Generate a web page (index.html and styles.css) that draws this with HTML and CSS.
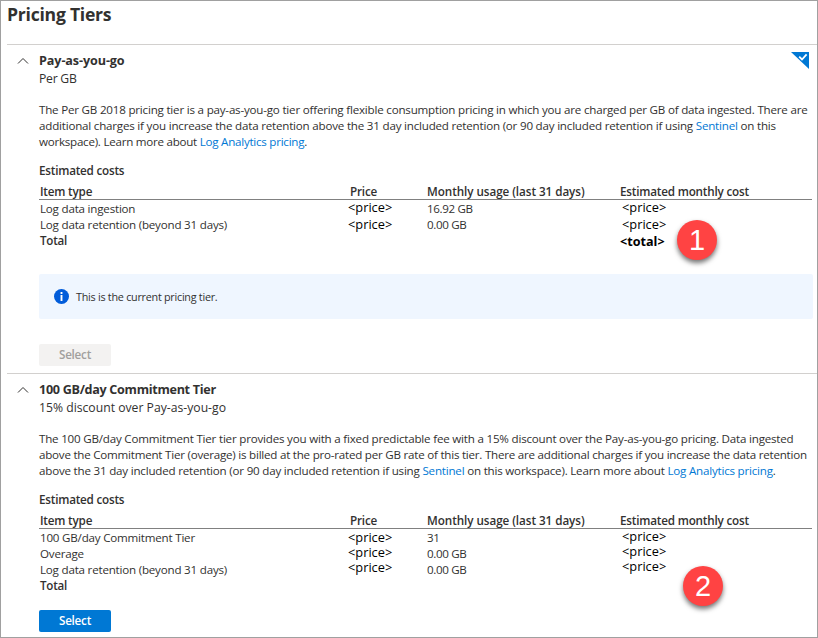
FILE: index.html
```
<!DOCTYPE html>
<html lang="en">
<head>
<meta charset="utf-8">
<title>Pricing Tiers</title>
<link rel="stylesheet" href="styles.css">
</head>
<body>
<main class="panel">
  <h1 class="title">Pricing Tiers</h1>

  <section class="tier">
    <svg class="chevron" viewBox="0 0 12 8"><path d="M1 6.5 6 1.5 11 6.5"/></svg>
    <svg class="selected" viewBox="0 0 18 17"><path class="corner" d="M0 0H18V17Z"/><path class="check" d="M8.2 4.6 11 7.5 15.6 2.4"/></svg>
    <div class="content">
      <h2 class="name">Pay-as-you-go</h2>
      <p class="subtitle short">Per GB</p>
      <p class="description"><span>The Per GB 2018 pricing tier is a pay-as-you-go tier offering flexible consumption pricing in which you are charged per GB of data ingested. There are</span>
        <span>additional charges if you increase the data retention above the 31 day included retention (or 90 day included retention if using <a>Sentinel</a> on this</span>
        <span class="tighter">workspace). Learn more about <a>Log Analytics pricing</a>.</span></p>
      <h3 class="costs-title">Estimated costs</h3>
      <div class="costs">
        <div class="row head"><span>Item type</span><span>Price</span><span class="wide">Monthly usage (last 31 days)</span><span>Estimated monthly cost</span></div>
        <div class="row lift"><span>Log data ingestion</span><span class="price">&lt;price&gt;</span><span class="usage">16.92 GB</span><span class="price cost">&lt;price&gt;</span></div>
        <div class="row"><span>Log data retention (beyond 31 days)</span><span class="price">&lt;price&gt;</span><span class="usage">0.00 GB</span><span class="price cost">&lt;price&gt;</span></div>
        <div class="row total"><span>Total</span><span></span><span></span><span class="sum">&lt;total&gt;</span></div>
      </div>
      <div class="info">
        <svg class="info-icon" viewBox="0 0 16 16"><circle cx="8" cy="8" r="8"/><path d="M7 6.5h2v6.2H7zM7 3.2h2v2H7z"/></svg>
        <span>This is the current pricing tier.</span>
      </div>
      <button class="select" disabled>Select</button>
    </div>
    <span class="badge first">1</span>
  </section>

  <section class="tier commitment">
    <svg class="chevron" viewBox="0 0 12 8"><path d="M1 6.5 6 1.5 11 6.5"/></svg>
    <div class="content">
      <h2 class="name">100 GB/day Commitment Tier</h2>
      <p class="subtitle">15% discount over Pay-as-you-go</p>
      <p class="description"><span>The 100 GB/day Commitment Tier tier provides you with a fixed predictable fee with a 15% discount over the Pay-as-you-go pricing. Data ingested</span>
        <span class="tight">above the Commitment Tier (overage) is billed at the pro-rated per GB rate of this tier. There are additional charges if you increase the data retention</span>
        <span>above the 31 day included retention (or 90 day included retention if using <a>Sentinel</a> on this workspace). Learn more about <a>Log Analytics pricing</a>.</span></p>
      <h3 class="costs-title">Estimated costs</h3>
      <div class="costs">
        <div class="row head"><span>Item type</span><span>Price</span><span class="wide">Monthly usage (last 31 days)</span><span>Estimated monthly cost</span></div>
        <div class="row"><span>100 GB/day Commitment Tier</span><span class="price">&lt;price&gt;</span><span class="usage">31</span><span class="price cost">&lt;price&gt;</span></div>
        <div class="row lift"><span>Overage</span><span class="price">&lt;price&gt;</span><span class="usage">0.00 GB</span><span class="price cost">&lt;price&gt;</span></div>
        <div class="row lift-more"><span>Log data retention (beyond 31 days)</span><span class="price">&lt;price&gt;</span><span class="usage">0.00 GB</span><span class="price cost">&lt;price&gt;</span></div>
        <div class="row total"><span>Total</span></div>
      </div>
      <button class="select primary">Select</button>
    </div>
    <span class="badge second">2</span>
  </section>
</main>
</body>
</html>
```
FILE: styles.css
```
* { box-sizing: border-box; }

body {
  margin: 0;
  background: #fff;
  color: #323130;
  font: 11.6px/16px "Open Sans", "Noto Sans", sans-serif;
  letter-spacing: -0.205px;
  white-space: nowrap;
}

h1, h2, h3, p { margin: 0; }

.panel {
  width: 818px;
  height: 638px;
  padding-left: 6px;
  border: 1px solid #a0a0a0;
  overflow: hidden;
}

.title {
  height: 43px;
  padding-top: 1px;
  font-size: 17.6px;
  line-height: 24px;
  font-weight: 700;
  letter-spacing: -0.25px;
}

.tier {
  position: relative;
  display: flex;
  align-items: flex-start;
  height: 329px;
  padding: 7px 4px 0 10px;
  border-top: 1px solid #d2d0ce;
}

.chevron {
  flex: none;
  width: 12px;
  height: 8px;
  margin-top: 5px;
  fill: none;
  stroke: #323130;
  stroke-width: 1;
}

.selected {
  position: absolute;
  top: 7px;
  right: 8px;
  width: 18px;
  height: 17px;
}

.corner { fill: #0078d4; }
.check { fill: none; stroke: #fff; stroke-width: 1.8; }

.content {
  flex: 1;
  margin-left: 10px;
}

.name {
  padding-top: 1px;
  font-size: 12.6px;
  line-height: 16px;
  font-weight: 700;
  letter-spacing: -0.1px;
}

.subtitle {
  margin-top: 1px;
  font-size: 12.2px;
  line-height: 18px;
  letter-spacing: 0;
}

.subtitle.short { letter-spacing: -0.25px; }

.description { margin-top: 14px; }
.description span { display: block; }
.description .tight { letter-spacing: -0.23px; }
.description .tighter { letter-spacing: -0.25px; }
.description a { color: #0078d4; }

.commitment .name { letter-spacing: -0.3px; }

.costs-title {
  margin-top: 12px;
  font-size: 11.7px;
  font-weight: 600;
  letter-spacing: -0.22px;
}

.costs {
  width: 773px;
  margin-top: 5px;
}

.row {
  display: grid;
  grid-template-columns: 310px 77px 193px 1fr;
  height: 16px;
  padding-left: 1px;
}

.head {
  height: 17px;
  margin-bottom: 1px;
  border-bottom: 1px solid #808080;
  font-weight: 600;
  font-size: 11.7px;
  letter-spacing: -0.2px;
}

.head .wide { letter-spacing: -0.06px; }

.price {
  height: 14px;
  margin: 0 0 0 -2px;
  color: #000;
  font-size: 12.8px;
  line-height: 14px;
  letter-spacing: 0;
}

.price.cost { margin-left: 2px; }
.lift .price { margin-top: -1px; }
.lift-more .price { margin-top: -2px; }
.commitment .cost { margin-top: -1px; }
.commitment .lift .cost { margin-top: -2px; }
.commitment .lift-more .cost { margin-top: -3px; }
.usage { letter-spacing: -0.35px; }

.total { font-weight: 600; }

.sum {
  padding-top: 1px;
  color: #000;
  font-size: 12.6px;
  font-weight: 700;
  letter-spacing: 0;
}

.info {
  display: flex;
  align-items: center;
  gap: 7px;
  width: 774px;
  height: 45px;
  margin-top: 25px;
  padding-left: 15px;
  border-radius: 2px;
  background: #eff6ff;
  font-size: 10.8px;
  letter-spacing: -0.26px;
}

.info-icon { width: 15px; height: 15px; fill: #015cda; }
.info-icon path { fill: #fff; }

.select {
  display: block;
  width: 72px;
  height: 22px;
  margin-top: 25px;
  padding: 0 0 2px;
  border: 0;
  border-radius: 2px;
  background: #f3f2f1;
  color: #a19f9d;
  font: 600 11.7px/20px "Open Sans", "Noto Sans", sans-serif;
  letter-spacing: -0.25px;
}

.select.primary {
  margin-top: 16px;
  background: #0078d4;
  color: #fff;
}

.badge {
  position: absolute;
  width: 40px;
  height: 40px;
  border-radius: 50%;
  background: #ff4343;
  box-shadow: 0 3px 5px rgba(0, 0, 0, 0.55);
  color: #fff;
  font: 29px/41px "Liberation Sans", Arial, sans-serif;
  letter-spacing: 0;
  text-align: center;
}

.first { left: 670px; top: 175px; }
.second { left: 676px; top: 192px; }
```
